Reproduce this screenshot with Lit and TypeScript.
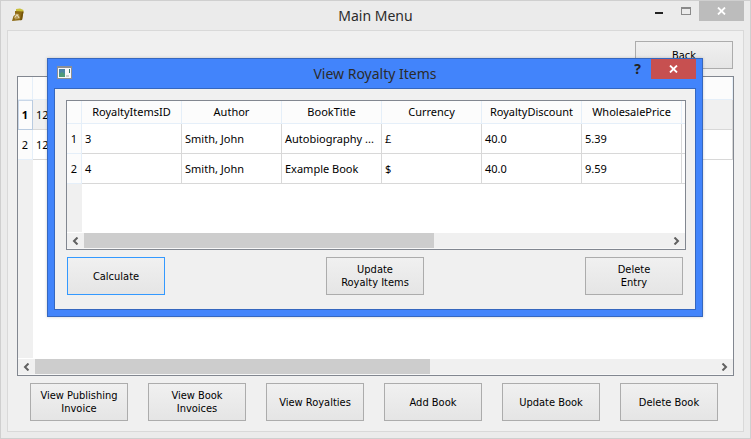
import { LitElement, html, css, svg, nothing } from "lit";
import { customElement, property } from "lit/decorators.js";

const closeGlyph = html`<svg width="9" height="8" viewBox="0 0 9 8" aria-hidden="true">
  <path d="M1 0.5L8 7.5M8 0.5L1 7.5" fill="none" stroke="#fff" stroke-width="1.8" />
</svg>`;

@customElement("push-button")
class PushButton extends LitElement {
  static properties = { label: {}, active: { type: Boolean } };
  declare label: string;
  declare active: boolean;

  static styles = css`
    :host {
      display: block;
      width: 98px;
      height: 38px;
    }
    .btn {
      box-sizing: border-box;
      width: 100%;
      height: 100%;
      padding: 0;
      border: 1px solid #acacac;
      background: linear-gradient(#f0f0f0, #e5e5e5);
      color: #000;
      font: 11px/13px "DejaVu Sans Condensed", "DejaVu Sans", sans-serif;
      white-space: pre-line;
      text-align: center;
    }
    .active {
      border-color: #3399ff;
    }
  `;

  render() {
    return html`<button class="btn ${this.active ? "active" : ""}">${this.label}</button>`;
  }
}

@customElement("scroll-strip")
class ScrollStrip extends LitElement {
  static properties = { thumb: { type: Number } };
  declare thumb: number;

  static styles = css`
    :host {
      display: flex;
      height: 15px;
      background: #f0f0f0;
      border-bottom: 1px solid #f8f8f8;
    }
    .arrow {
      width: 17px;
      padding: 0;
      border: 0;
      background: none;
      line-height: 0;
    }
    .track {
      flex: 1;
    }
    .thumb {
      height: 100%;
      background: #cdcdcd;
    }
  `;

  arrow(label: string, d: string) {
    return html`<button class="arrow" aria-label=${label}>
      <svg width="7" height="8" viewBox="0 0 7 8" aria-hidden="true">
        <path d=${d} fill="none" stroke="#606060" stroke-width="2" />
      </svg>
    </button>`;
  }

  render() {
    return html`
      ${this.arrow("Scroll left", "M5.5 0.5L2 4L5.5 7.5")}
      <div class="track"><div class="thumb" style="width:${this.thumb}%"></div></div>
      ${this.arrow("Scroll right", "M1.5 0.5L5 4L1.5 7.5")}
    `;
  }
}

@customElement("data-grid")
class DataGrid extends LitElement {
  static properties = {
    columns: { type: Array },
    rows: { type: Array },
    fill: { type: Boolean },
    selected: { type: Number },
    thumb: { type: Number },
  };
  declare columns: string[];
  declare rows: string[][];
  declare fill: boolean;
  declare selected: number;
  declare thumb: number;

  static styles = css`
    :host {
      display: flex;
      flex-direction: column;
      border: 1px solid #828790;
      background: #fff;
      overflow: hidden;
    }
    .view {
      flex: 1;
      display: flex;
      flex-direction: column;
      overflow: hidden;
      margin-bottom: 1px;
    }
    table {
      table-layout: fixed;
      width: 0;
      border-collapse: separate;
      border-spacing: 0;
      color: #000;
      font: 11px/14px "Noto Sans", "Open Sans", sans-serif;
    }
    .fill {
      width: 100%;
    }
    .index {
      width: 15px;
    }
    .column {
      width: 100px;
    }
    .fill .column {
      width: auto;
    }
    th,
    td {
      box-sizing: border-box;
      overflow: hidden;
      white-space: nowrap;
      text-overflow: ellipsis;
    }
    th {
      padding: 0;
      font-weight: 400;
      text-align: center;
      background: #fcfcfc;
      border-right: 1px solid #e5eff9;
      border-bottom: 1px solid #e5eff9;
    }
    thead th {
      height: 23px;
    }
    td {
      height: 30px;
      padding: 0 3px;
      border-right: 1px solid #d8d8d8;
      border-bottom: 1px solid #d8d8d8;
    }
    .selected td {
      background: #f0f0f0;
    }
    .selected th {
      font-weight: 700;
      border-color: #b9cbe0;
      box-shadow: inset 1px 1px #c9d7e8;
    }
    .gutter {
      flex: 1;
      width: 15px;
      background: #f0f0f0;
    }
  `;

  render() {
    return html`
      <div class="view">
        <table class=${this.fill ? "fill" : nothing}>
          <colgroup>
            <col class="index" />
            ${this.columns.map(() => html`<col class="column" />`)}
          </colgroup>
          <thead>
            <tr>
              <th></th>
              ${this.columns.map((name) => html`<th scope="col">${name}</th>`)}
            </tr>
          </thead>
          <tbody>
            ${this.rows.map(
              (row, i) => html`<tr class=${this.selected === i ? "selected" : nothing}>
                <th scope="row">${i + 1}</th>
                ${row.map((cell) => html`<td>${cell}</td>`)}
              </tr>`
            )}
          </tbody>
        </table>
        <div class="gutter"></div>
      </div>
      <scroll-strip .thumb=${this.thumb}></scroll-strip>
    `;
  }
}

@customElement("app-root")
class AppRoot extends LitElement {
  static styles = css`
    :host {
      display: block;
    }
    .window {
      position: relative;
      box-sizing: border-box;
      min-height: 100vh;
      display: flex;
      flex-direction: column;
      padding: 0 6px 6px;
      border: 1px solid #cfcfcf;
      background: #ebebeb;
    }
    .bar {
      display: grid;
      grid-template-columns: 1fr auto 1fr;
      align-items: start;
      height: 29px;
    }
    .title {
      margin: 0;
      font: 14px/29px "Noto Sans", "Open Sans", sans-serif;
      color: #2b2b2b;
    }
    .icon {
      display: block;
    }
    .controls {
      display: flex;
      justify-content: flex-end;
    }
    .ctl {
      display: grid;
      place-items: center;
      width: 27px;
      height: 20px;
      padding: 0;
      border: 0;
      background: none;
      color: #222;
      font: 700 14px/20px "Noto Sans", "Open Sans", sans-serif;
    }
    .close {
      width: 45px;
      background: #bcbcbc;
    }
    .client {
      flex: 1;
      display: flex;
      flex-direction: column;
      padding: 10px 9px;
      border: 1px solid #d9d9d9;
      background: #f0f0f0;
    }
    .back {
      align-self: flex-end;
      height: 28px;
      margin: 0 1px 7px;
    }
    .main-grid {
      flex: 1;
    }
    .actions {
      display: flex;
      justify-content: space-between;
      padding: 7px 16px 0 13px;
    }
    .dialog {
      position: absolute;
      top: 57px;
      left: 46px;
      right: 47px;
      box-sizing: border-box;
      padding: 0 6px 6px;
      border: 1px solid #3567bf;
      background: #4284fb;
      box-shadow: 0 0 3px rgba(0, 0, 0, 0.2);
    }
    .dialog .close {
      background: #c75050;
    }
    .body {
      padding: 11px 9px 14px 11px;
      border: 1px solid #3567bf;
      background: #f0f0f0;
    }
    .item-grid {
      height: 148px;
    }
    .dialog .actions {
      padding: 7px 3px 0 1px;
    }
  `;

  mainIcon() {
    return html`<svg class="icon" width="24" height="22" viewBox="0 0 24 22" aria-hidden="true">
      <path d="M9 8L13 7.5L16.5 9L16 12H9z" fill="#c9c03a" />
      <path d="M8 10L16.5 10.5L15 19L5 20L6.5 15L8 14z" fill="#8d6a14" />
      <path d="M7 16L8.5 12.5L12 13L13 17.5L8 18.5z" fill="#b79a55" />
      <path d="M8 16.5L10 13.5L12 17" fill="none" stroke="#ece2c4" />
      <path d="M15 11L16.5 10.5L15 19L13 19.2z" fill="#745409" />
    </svg>`;
  }

  formIcon() {
    return html`<svg class="icon" width="24" height="22" viewBox="0 0 24 22" aria-hidden="true">
      <rect x="3" y="7" width="15" height="13" fill="#8c8f94" />
      <rect x="4" y="9" width="13" height="10" fill="#f8f8f8" />
      <rect x="5" y="10" width="6" height="8" fill="#4b83a6" />
      <path d="M5 18V15L8 13L11 15V18z" fill="#4f9a79" />
      <rect x="15" y="10" width="1" height="4" fill="#34796b" />
      <rect x="12" y="16" width="3" height="2" fill="#cfcfcf" />
    </svg>`;
  }

  render() {
    return html`
      <main class="window">
        <header class="bar">
          ${this.mainIcon()}
          <h1 class="title">Main Menu</h1>
          <div class="controls">
            <button class="ctl" aria-label="Minimize">
              <svg width="8" height="8" viewBox="0 0 8 8"><path d="M0 5h8v2H0z" fill="#222" /></svg>
            </button>
            <button class="ctl" aria-label="Maximize">
              <svg width="10" height="8" viewBox="0 0 10 8">
                <path d="M0 0H10V8H0zM1 2V7H9V2z" fill="#8a8a8a" fill-rule="evenodd" />
              </svg>
            </button>
            <button class="ctl close" aria-label="Close">${closeGlyph}</button>
          </div>
        </header>
        <section class="client">
          <push-button class="back" label="Back"></push-button>
          <data-grid
            class="main-grid"
            fill
            .columns=${[""]}
            .rows=${[["12"], ["12"]]}
            .selected=${0}
            .thumb=${58}
          ></data-grid>
          <div class="actions">
            ${["View Publishing\nInvoice", "View Book\nInvoices", "View Royalties", "Add Book", "Update Book", "Delete Book"].map(
              (label) => html`<push-button .label=${label}></push-button>`
            )}
          </div>
        </section>

        <section class="dialog" role="dialog" aria-labelledby="dialog-title">
          <header class="bar">
            ${this.formIcon()}
            <h2 class="title" id="dialog-title">View Royalty Items</h2>
            <div class="controls">
              <button class="ctl" aria-label="Help">?</button>
              <button class="ctl close" aria-label="Close">${closeGlyph}</button>
            </div>
          </header>
          <div class="body">
            <data-grid
              class="item-grid"
              .columns=${["RoyaltyItemsID", "Author", "BookTitle", "Currency", "RoyaltyDiscount", "WholesalePrice", ""]}
              .rows=${[
                ["3", "Smith, John", "Autobiography ...", "£", "40.0", "5.39", ""],
                ["4", "Smith, John", "Example Book", "$", "40.0", "9.59", ""],
              ]}
              .thumb=${60}
            ></data-grid>
            <div class="actions">
              <push-button label="Calculate" active></push-button>
              <push-button .label=${"Update\nRoyalty Items"}></push-button>
              <push-button .label=${"Delete\nEntry"}></push-button>
            </div>
          </div>
        </section>
      </main>
    `;
  }
}
